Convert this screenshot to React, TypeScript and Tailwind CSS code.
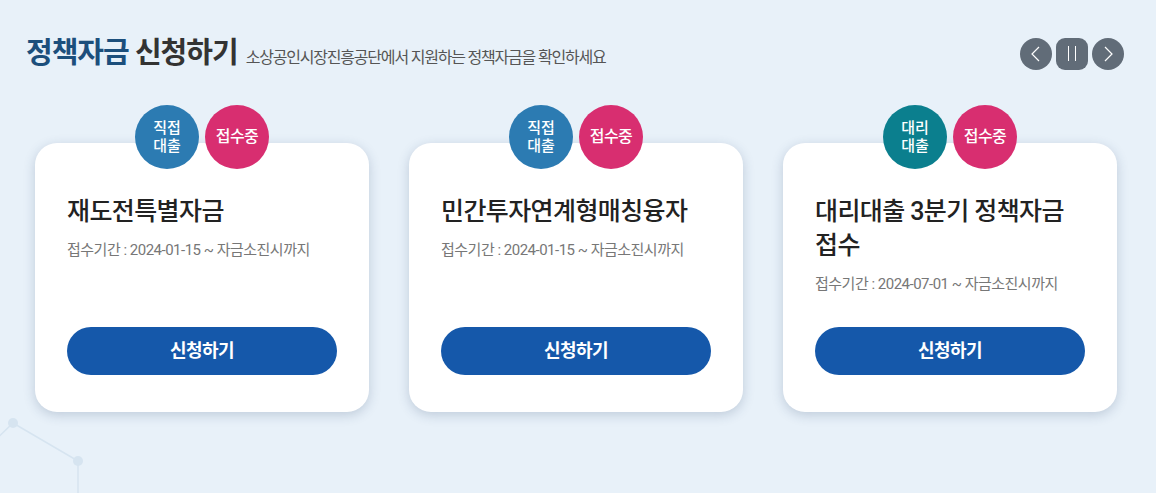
import React from "react";

interface Fund {
  id: number;
  kind: string[];
  kindColor: string;
  title: string;
  period: string;
}

const funds: Fund[] = [
  { id: 1, kind: ["직접", "대출"], kindColor: "bg-[#2c7bb2]", title: "재도전특별자금", period: "접수기간 : 2024-01-15 ~ 자금소진시까지" },
  { id: 2, kind: ["직접", "대출"], kindColor: "bg-[#2c7bb2]", title: "민간투자연계형매칭융자", period: "접수기간 : 2024-01-15 ~ 자금소진시까지" },
  { id: 3, kind: ["대리", "대출"], kindColor: "bg-[#0b7f8e]", title: "대리대출 3분기 정책자금 접수", period: "접수기간 : 2024-07-01 ~ 자금소진시까지" },
];

function NavButtons() {
  return (
    <div className="flex items-center gap-[4px]">
      <button className="w-8 h-8 rounded-full bg-[#616c78] flex items-center justify-center">
        <svg width="14" height="20" viewBox="0 0 14 20" fill="none">
          <path d="M10 3 L3 10 L10 17" stroke="white" strokeWidth="1.2" />
        </svg>
      </button>
      <button className="w-8 h-8 rounded-[9px] bg-[#616c78] flex items-center justify-center gap-[6px]">
        <span className="block w-px h-[15px] bg-white" />
        <span className="block w-px h-[15px] bg-white" />
      </button>
      <button className="w-8 h-8 rounded-full bg-[#616c78] flex items-center justify-center">
        <svg width="14" height="20" viewBox="0 0 14 20" fill="none">
          <path d="M4 3 L11 10 L4 17" stroke="white" strokeWidth="1.2" />
        </svg>
      </button>
    </div>
  );
}

function FundCard({ fund }: { fund: Fund }) {
  return (
    <div className="relative w-[334px] pt-[38px]">
      {/* Badges */}
      <div className="absolute top-0 left-0 right-0 flex justify-center gap-[6px] z-10">
        <div className={`w-16 h-16 rounded-full ${fund.kindColor} flex flex-col items-center justify-center text-white text-[15px] leading-[18px] font-medium`}>
          <span>{fund.kind[0]}</span>
          <span>{fund.kind[1]}</span>
        </div>
        <div className="w-16 h-16 rounded-full bg-[#d82e70] flex items-center justify-center text-white text-[16px] font-medium tracking-[-0.5px]">
          접수중
        </div>
      </div>

      <div className="h-[269px] bg-white rounded-[22px] shadow-[0_3px_12px_rgba(40,70,110,0.22)] flex flex-col px-8 pt-[52px] pb-[37px]">
        <h3 className="text-[25px] leading-[34px] text-[#222] font-medium tracking-[-0.6px] break-keep">{fund.title}</h3>
        <p className="mt-[10px] text-[15px] leading-[22px] text-[#777] tracking-[-0.5px]">{fund.period}</p>
        <button className="mt-auto h-12 w-full rounded-full bg-[#1558aa] text-white text-[18px] font-bold tracking-[-0.5px]">
          신청하기
        </button>
      </div>
    </div>
  );
}

export default function App() {
  return (
    <div
      className="relative w-[1156px] h-[493px] overflow-hidden bg-[#e8f1f9]"
      style={{ fontFamily: "Roboto, 'Noto Sans CJK KR', sans-serif" }}
    >
      {/* Background decoration */}
      <svg className="absolute left-0 top-0" width="1156" height="493" fill="none">
        <path d="M-10 445 L13 423 L78 461 L78 493" stroke="#d6e4f0" strokeWidth="1.5" />
        <circle cx="13" cy="423" r="5" fill="#d6e4f0" />
        <circle cx="78" cy="461" r="5" fill="#d6e4f0" />
      </svg>

      <div className="relative pt-[32px]">
        {/* Header */}
        <div className="flex items-center justify-between pl-[26px] pr-[32px]">
          <div className="flex items-baseline gap-[8px]">
            <h2 className="text-[29px] font-bold tracking-[-1px] text-[#333]">
              <span className="text-[#1c4f7c]">정책자금</span> 신청하기
            </h2>
            <p className="text-[16px] text-[#555] tracking-[-1.2px]">소상공인시장진흥공단에서 지원하는 정책자금을 확인하세요</p>
          </div>
          <NavButtons />
        </div>

        {/* Cards */}
        <div className="flex gap-10 pl-[35px] mt-[29px]">
          {funds.map((f) => (
            <FundCard key={f.id} fund={f} />
          ))}
        </div>
      </div>
    </div>
  );
}
